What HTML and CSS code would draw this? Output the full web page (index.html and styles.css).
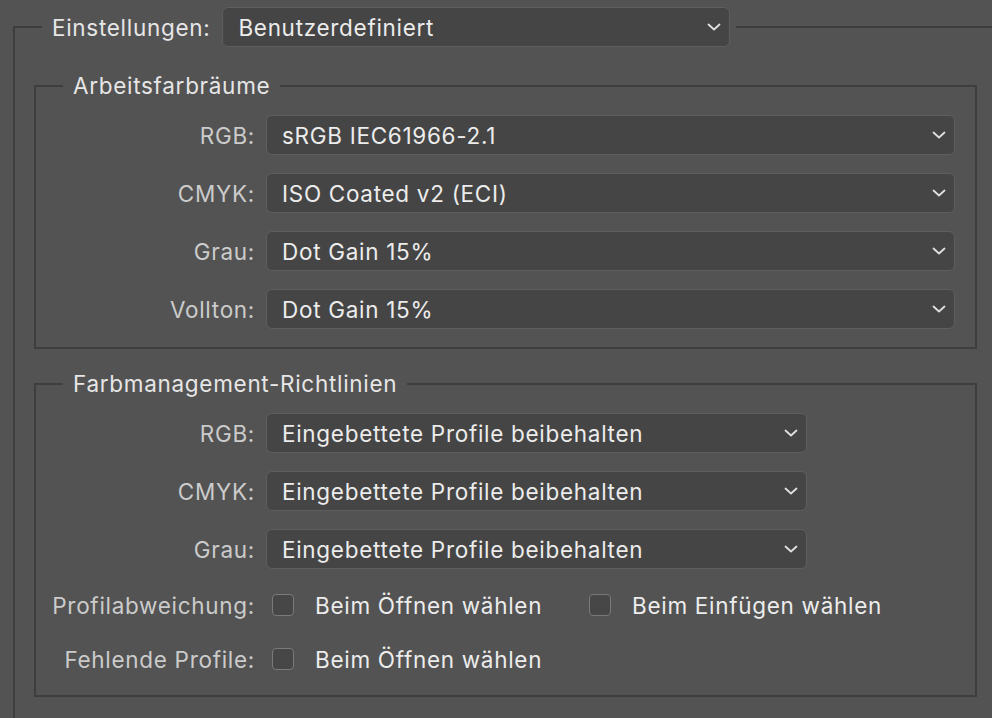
FILE: index.html
```html
<!DOCTYPE html>
<html lang="de">
<head>
    <meta charset="UTF-8">
    <meta name="viewport" content="width=device-width, initial-scale=1.0">
    <title>Farbeinstellungen</title>
    <link rel="stylesheet" href="styles.css">
</head>
<body>
    <fieldset class="settings">
        <legend class="settings-legend">
            <span class="settings-label">Einstellungen:</span>
            <div class="dropdown dropdown-top">
                <span>Benutzerdefiniert</span>
                <svg class="chevron" viewBox="0 0 14 8"><path d="M1.5 1.5 L7 6.5 L12.5 1.5"/></svg>
            </div>
        </legend>

        <fieldset class="group">
            <legend>Arbeitsfarbräume</legend>
            <div class="rows">
                <label>RGB:</label>
                <div class="dropdown">
                    <span>sRGB IEC61966-2.1</span>
                    <svg class="chevron" viewBox="0 0 14 8"><path d="M1.5 1.5 L7 6.5 L12.5 1.5"/></svg>
                </div>
                <label>CMYK:</label>
                <div class="dropdown">
                    <span>ISO Coated v2 (ECI)</span>
                    <svg class="chevron" viewBox="0 0 14 8"><path d="M1.5 1.5 L7 6.5 L12.5 1.5"/></svg>
                </div>
                <label>Grau:</label>
                <div class="dropdown">
                    <span>Dot Gain 15%</span>
                    <svg class="chevron" viewBox="0 0 14 8"><path d="M1.5 1.5 L7 6.5 L12.5 1.5"/></svg>
                </div>
                <label>Vollton:</label>
                <div class="dropdown">
                    <span>Dot Gain 15%</span>
                    <svg class="chevron" viewBox="0 0 14 8"><path d="M1.5 1.5 L7 6.5 L12.5 1.5"/></svg>
                </div>
            </div>
        </fieldset>

        <fieldset class="group group-policy">
            <legend>Farbmanagement-Richtlinien</legend>
            <div class="rows">
                <label>RGB:</label>
                <div class="dropdown dropdown-short">
                    <span>Eingebettete Profile beibehalten</span>
                    <svg class="chevron" viewBox="0 0 14 8"><path d="M1.5 1.5 L7 6.5 L12.5 1.5"/></svg>
                </div>
                <label>CMYK:</label>
                <div class="dropdown dropdown-short">
                    <span>Eingebettete Profile beibehalten</span>
                    <svg class="chevron" viewBox="0 0 14 8"><path d="M1.5 1.5 L7 6.5 L12.5 1.5"/></svg>
                </div>
                <label>Grau:</label>
                <div class="dropdown dropdown-short">
                    <span>Eingebettete Profile beibehalten</span>
                    <svg class="chevron" viewBox="0 0 14 8"><path d="M1.5 1.5 L7 6.5 L12.5 1.5"/></svg>
                </div>
                <label>Profilabweichung:</label>
                <div class="checks">
                    <div class="check check-first"><span class="box"></span>Beim Öffnen wählen</div>
                    <div class="check"><span class="box"></span>Beim Einfügen wählen</div>
                </div>
                <label>Fehlende Profile:</label>
                <div class="checks">
                    <div class="check check-first"><span class="box"></span>Beim Öffnen wählen</div>
                </div>
            </div>
        </fieldset>
    </fieldset>
</body>
</html>
```

FILE: styles.css
```css
html, body {
    margin: 0;
    height: 100%;
    overflow: hidden;
}
body {
    background-color: #535353;
    font-family: Inter, "Noto Sans", sans-serif;
    font-size: 22.5px;
    letter-spacing: 0.7px;
    color: #e6e6e6;
}
fieldset {
    margin: 0;
    padding: 0;
    min-width: 0;
    border: 2px solid #3e3e3e;
}
.settings {
    margin: 7px 0 0 13px;
    width: 979px;
    height: 711px;
    box-sizing: border-box;
    border-right: none;
    border-bottom: none;
}
.settings-legend {
    display: flex;
    align-items: center;
    margin-left: 27px;
    padding: 0 6px 0 10px;
}
.settings-label {
    margin-right: 12px;
    color: #e6e6e6;
}
.group {
    margin: 26px 0 0 19px;
    width: 943px;
    box-sizing: border-box;
}
.group-policy {
    margin-top: 22px;
}
.group legend {
    margin-left: 27px;
    padding: 0 10px;
    line-height: 26px;
    color: #e6e6e6;
}
.rows {
    display: grid;
    grid-template-columns: 219px 689px;
    column-gap: 11px;
    row-gap: 18px;
    align-items: center;
    padding: 16px 0 18px 0;
}
label {
    text-align: right;
    color: #cbcbcb;
    white-space: nowrap;
}
.dropdown {
    display: flex;
    align-items: center;
    justify-content: space-between;
    height: 40px;
    box-sizing: border-box;
    padding: 0 8px 0 15px;
    background: #454545;
    border: 1.5px solid #5e5e5e;
    border-radius: 6px;
    color: #ececec;
}
.dropdown-top {
    width: 508px;
}
.dropdown-short {
    width: 541px;
}
.chevron {
    width: 14px;
    height: 8px;
    fill: none;
    stroke: #e0e0e0;
    stroke-width: 1.8;
    stroke-linecap: round;
    stroke-linejoin: round;
}
.checks {
    display: flex;
    align-items: center;
    height: 36px;
}
.check {
    display: flex;
    align-items: center;
    color: #ececec;
    margin-left: 6px;
}
.check-first {
    width: 311px;
}
.box {
    width: 20px;
    height: 20px;
    border: 1.5px solid #7a7a7a;
    border-radius: 4px;
    background: #474747;
    margin-right: 21px;
}
```
